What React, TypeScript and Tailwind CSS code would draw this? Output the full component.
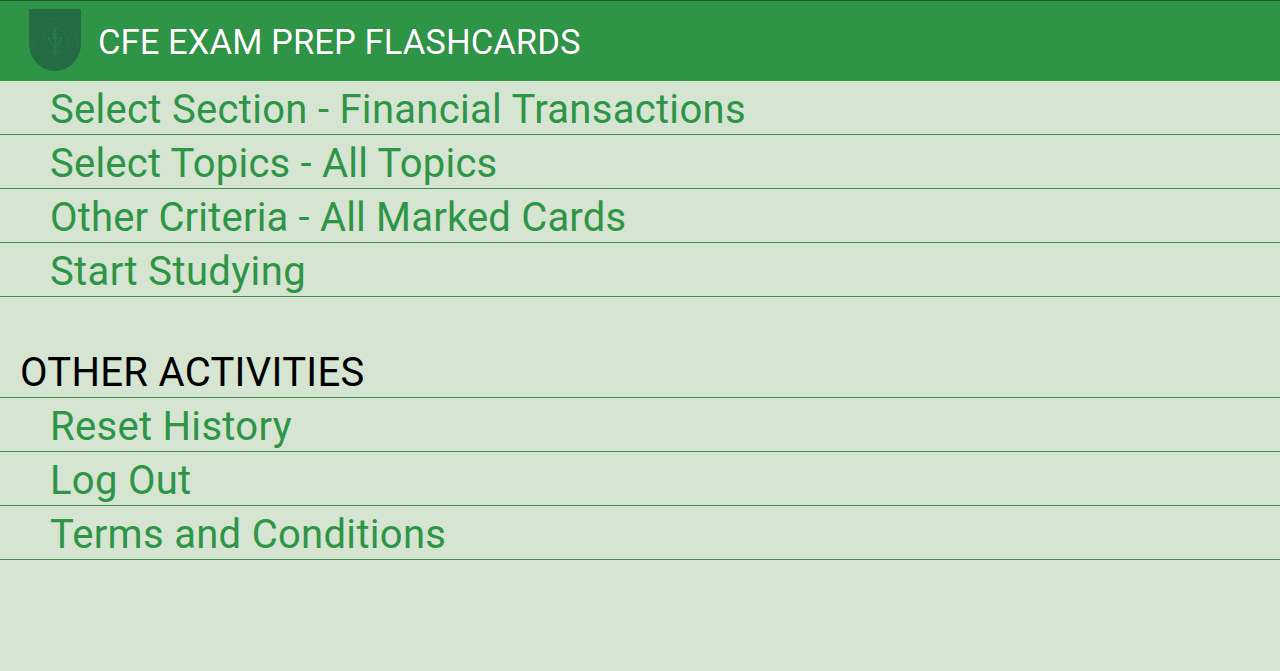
const sectionOne = [
  { label: "Select Section - Financial Transactions", tracking: "tracking-[0.3px]" },
  { label: "Select Topics - All Topics", tracking: "tracking-[0.22px]" },
  { label: "Other Criteria - All Marked Cards", tracking: "tracking-[0.18px]" },
  { label: "Start Studying", tracking: "tracking-[0.37px]" },
];
const sectionTwo = [
  { label: "Reset History", tracking: "tracking-[0.3px]" },
  { label: "Log Out", tracking: "tracking-[0.3px]" },
  { label: "Terms and Conditions", tracking: "tracking-[0.3px]" },
];

function Row({ label, tracking }: { label: string; tracking: string }) {
  return (
    <div className={`h-[54px] border-b border-[#3c8f50] pl-[50px] pt-[2px] text-[40px] leading-[54px] text-[#2e9546] whitespace-nowrap ${tracking}`}>
      {label}
    </div>
  );
}

function Crest() {
  return (
    <svg width="52" height="62" viewBox="0 0 52 62" className="shrink-0">
      <path d="M0 0H52V34C52 50 40 62 26 62C12 62 0 50 0 34Z" fill="#236b43" />
      <g fill="none" stroke="#29724a" strokeWidth="1">
        <circle cx="26" cy="32" r="22" />
        <circle cx="26" cy="32" r="18" strokeDasharray="2 1" />
        <circle cx="26" cy="32" r="13" />
      </g>
      <path d="M26 20V46M19 27C21 34 24 37 26 38C28 37 31 34 33 27M22 42H30M23 24L29 30M29 24L23 30" fill="none" stroke="#2b784b" strokeWidth="1.5" />
    </svg>
  );
}

export default function App() {
  return (
    <div className="h-[671px] w-[1280px] overflow-hidden bg-[#d6e4d2] font-['Roboto',sans-serif]">
      <header className="flex h-[81px] items-start border-t border-[#1c5a2b] bg-[#2e9546] pl-[29px] pt-[8px]">
        <Crest />
        <h1 className="ml-[17px] text-[34.7px] font-normal leading-[66px] text-white whitespace-nowrap [text-shadow:0_0_1px_rgba(0,0,0,0.35)]">
          CFE EXAM PREP FLASHCARDS
        </h1>
      </header>
      {sectionOne.map((s) => <Row key={s.label} label={s.label} tracking={s.tracking} />)}
      <div className="mt-[46px] h-[55px] border-b border-[#3c8f50] pl-[20px] pt-[3px] text-[40px] leading-[54px] tracking-[0.3px] text-black whitespace-nowrap">
        OTHER ACTIVITIES
      </div>
      {sectionTwo.map((s) => <Row key={s.label} label={s.label} tracking={s.tracking} />)}
    </div>
  );
}
